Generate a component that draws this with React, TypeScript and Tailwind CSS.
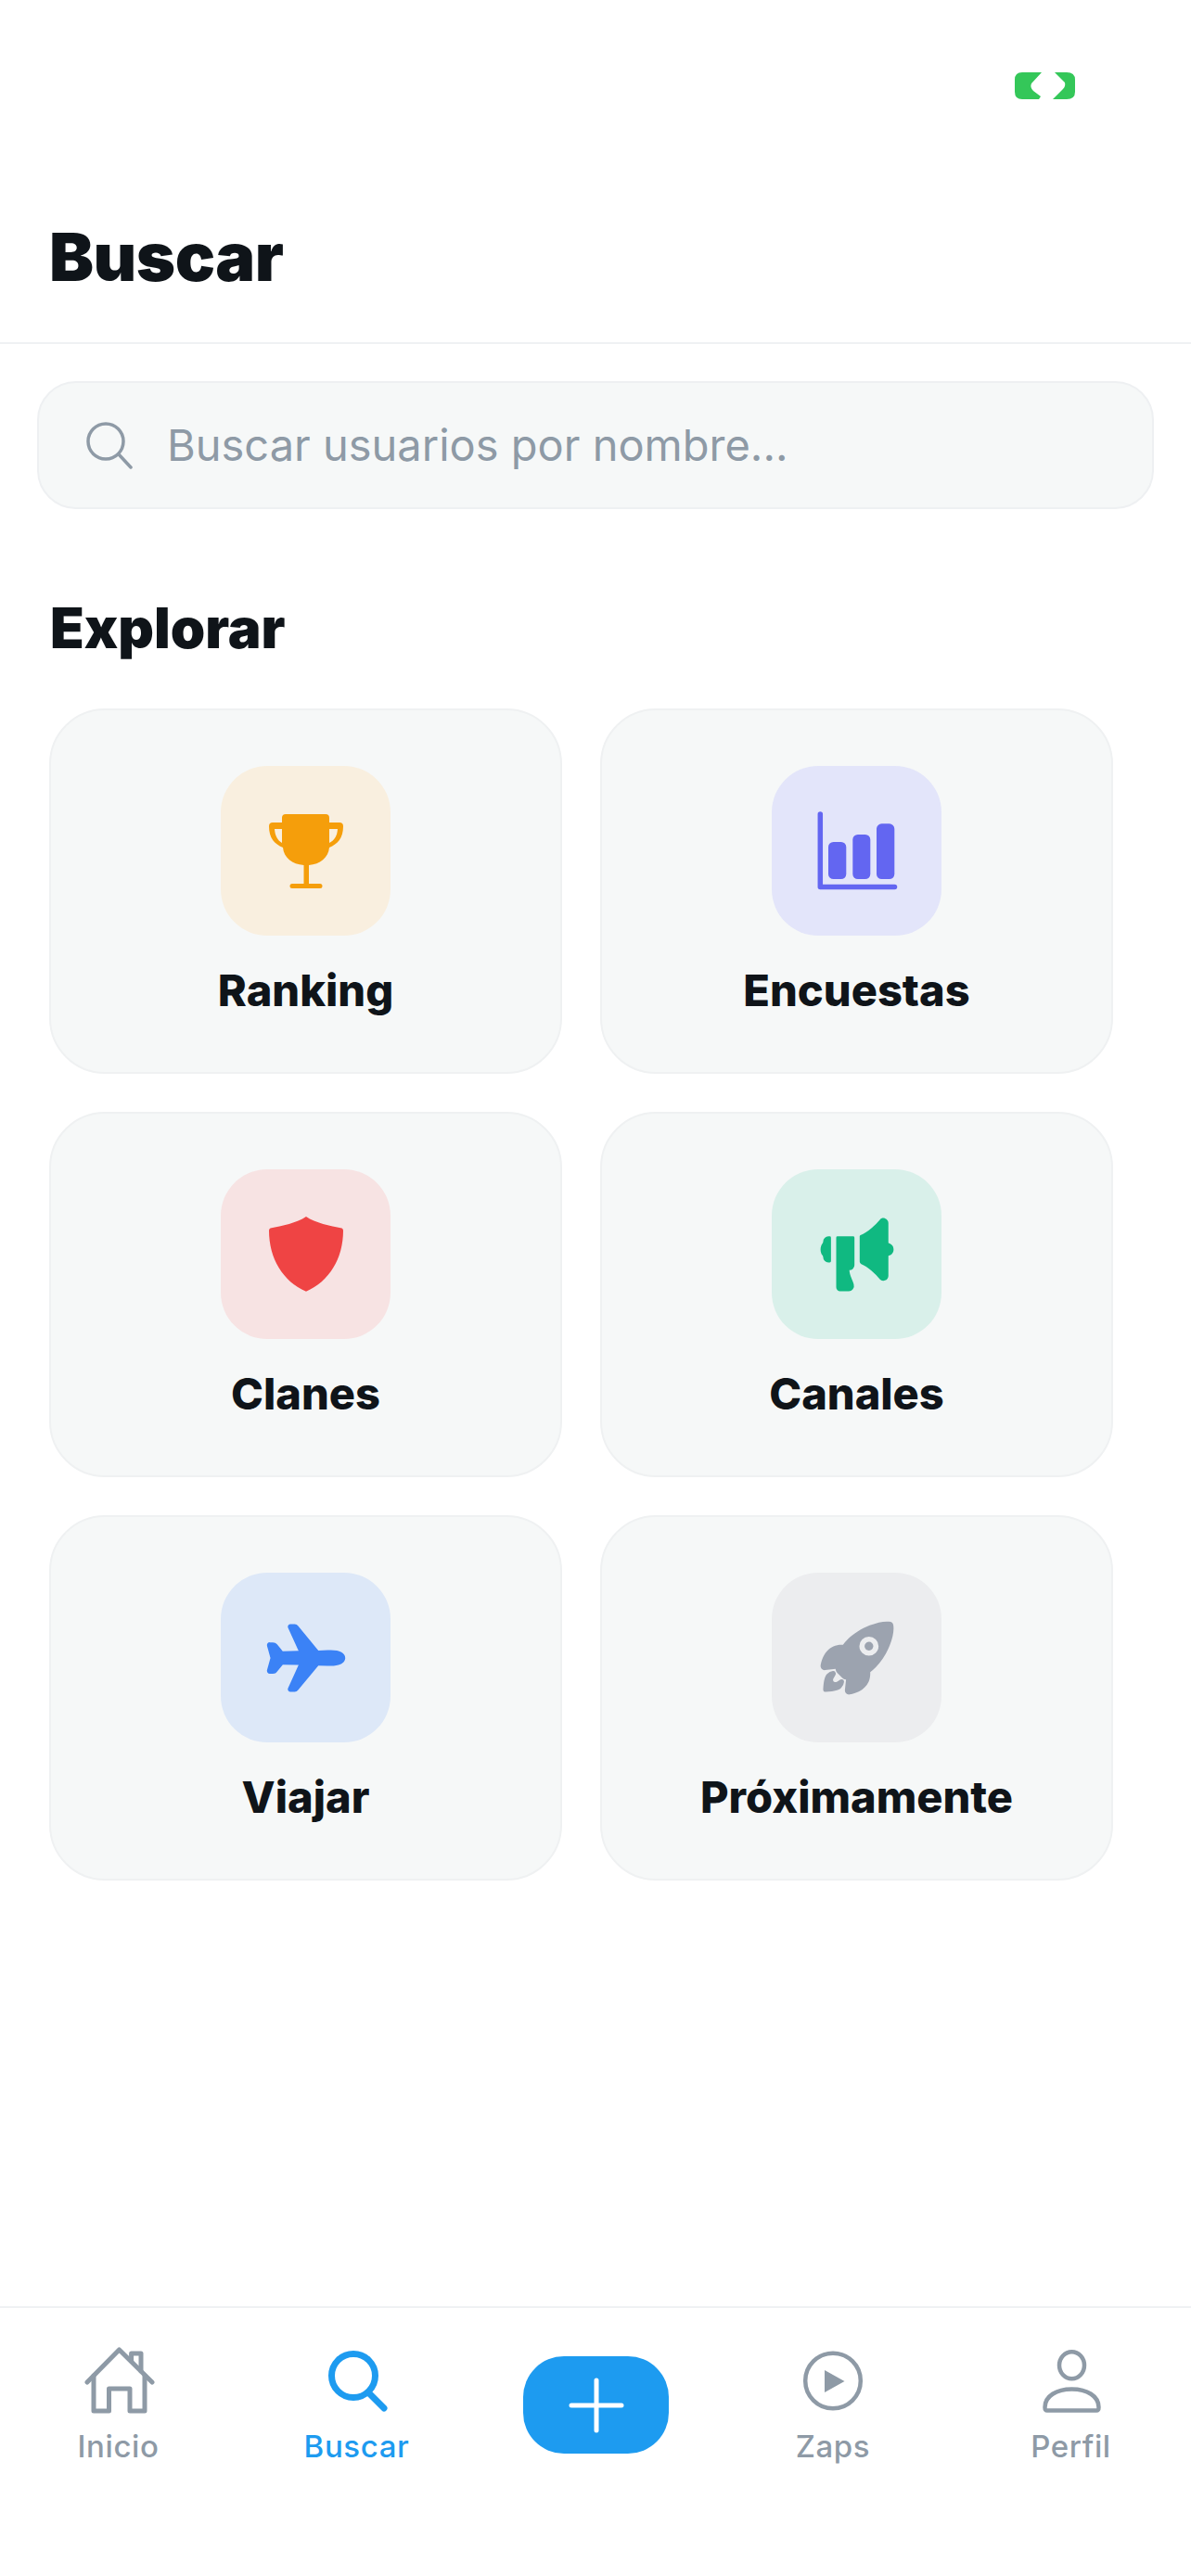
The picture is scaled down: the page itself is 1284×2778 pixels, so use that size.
import React from "react";
import { IoMegaphone, IoAirplane, IoRocket } from "react-icons/io5";

function Trophy() {
  return (
    <svg width="80" height="80" viewBox="0 0 80 80" fill="currentColor" fillRule="evenodd">
      <path d="M18 0H61Q65 0 65 4V9H76Q80 9 80 13C80 26 74 32 65 36C64 47 55 54 43 55V75H55Q57.5 75 57.5 77.5Q57.5 80 55 80H25Q22.5 80 22.5 77.5Q22.5 75 25 75H37.5V55C25 54 16 47 15 36C6 32 0 26 0 13Q0 9 4 9H14V4Q14 0 18 0ZM6 16C6.5 23 9 28 14 31V16ZM74 16C73.5 23 71 28 65 31V16Z" />
    </svg>
  );
}

function Chart() {
  return (
    <svg width="90" height="90" viewBox="-2 -2 90 90" fill="currentColor">
      <rect x="12" y="33" width="19.3" height="40" rx="5.5" />
      <rect x="38.3" y="25" width="19" height="48" rx="5.5" />
      <rect x="64" y="13.3" width="19.3" height="59.7" rx="5.5" />
      <path d="M3.3 3V81.5H83.5" fill="none" stroke="currentColor" strokeWidth="5.5" strokeLinecap="round" strokeLinejoin="round" />
    </svg>
  );
}

function Shield() {
  return (
    <svg width="80" height="81" viewBox="0 0 80 81" fill="currentColor">
      <path d="M40 0C30 7 14 10 1.5 12.5Q0 13 0 15C0 45 15 70 40 80.7C65 70 80 45 80 15Q80 13 78.5 12.5C66 10 50 7 40 0Z" />
    </svg>
  );
}

const items = [
  { label: "Ranking", icon: <Trophy />, tile: "bg-[#f9efdf]", color: "text-[#f59e0b]" },
  { label: "Encuestas", icon: <Chart />, tile: "bg-[#e3e5fa]", color: "text-[#6366f1]" },
  { label: "Clanes", icon: <Shield />, tile: "bg-[#f7e3e3]", color: "text-[#ef4444]" },
  { label: "Canales", icon: <IoMegaphone size={90} />, tile: "bg-[#d9f0ea]", color: "text-[#10b981]" },
  { label: "Viajar", icon: <IoAirplane size={90} />, tile: "bg-[#dde8f8]", color: "text-[#3b82f6]" },
  { label: "Próximamente", icon: <IoRocket size={90} />, tile: "bg-[#ecedef]", color: "text-[#9ca3af]" },
];

function NavItem({ label, active, children }: { label: string; active?: boolean; children: React.ReactNode }) {
  return (
    <div className="flex flex-col items-center">
      {children}
      <span className={`mt-[10px] text-[33px] leading-[40px] font-medium tracking-[0.6px] ${active ? "text-[#1d9bf0]" : "text-[#8e9aa6]"}`}>
        {label}
      </span>
    </div>
  );
}

export default function App() {
  return (
    <div className="relative h-[2778px] w-[1284px] bg-white font-['Inter',sans-serif] text-[#0f1419]">
      <header className="flex h-[371px] flex-col border-b-2 border-[#eff1f3] pt-[78px]">
        <div className="flex justify-end pr-[125px]">
          <svg width="66" height="30" viewBox="43 18 66 30" fill="#34c759">
            <path d="M73 18H52Q44 18 44 26V39Q44 47 52 47H70L72 44L64 38Q60 34 62 30Z" />
            <path d="M87 18H100Q109 18 109 26V39Q109 47 100 47H85L96 36Q99 33 98 29Z" />
          </svg>
        </div>
        <h1 className="mt-[127px] pl-[53px] text-[72px] leading-[84px] font-black tracking-[-0.5px]">Buscar</h1>
      </header>

      <div className="mx-[40px] mt-[40px] flex h-[138px] items-center rounded-[42px] border-2 border-[#eef0f2] bg-[#f6f8f8] pl-[50px]">
        <svg width="52" height="52" viewBox="0 0 52 52" fill="none" stroke="#8e9aa6" strokeWidth="3.5" strokeLinecap="round">
          <circle cx="22" cy="22" r="19" />
          <path d="M36 36L49 50" />
        </svg>
        <span className="ml-[36px] text-[47px] leading-[56px] text-[#8e9aa6]">Buscar usuarios por nombre...</span>
      </div>

      <h2 className="mt-[92px] pl-[54px] text-[60px] leading-[72px] font-black">Explorar</h2>

      <div className="mt-[51px] ml-[53px] grid w-[1147px] grid-cols-2 gap-[41px]">
        {items.map(({ label, icon, tile, color }) => (
          <div key={label} className="flex h-[394px] flex-col items-center rounded-[60px] border-2 border-[#eff1f2] bg-[#f6f8f8] pt-[60px]">
            <div className={`flex h-[183px] w-[183px] items-center justify-center rounded-[50px] ${tile} ${color}`}>
              {icon}
            </div>
            <span className="mt-[29px] text-[47px] leading-[60px] font-extrabold">{label}</span>
          </div>
        ))}
      </div>

      <nav className="absolute right-0 bottom-0 left-0 h-[291px] border-t-2 border-[#eff1f3] pt-[39px]">
        <div className="grid grid-cols-[255px_259px_257px_254px_259px]">
          <NavItem label="Inicio">
            <svg width="80" height="80" viewBox="0 0 80 80" fill="none" stroke="#8e9aa6" strokeWidth="5" strokeLinecap="round" strokeLinejoin="round">
              <path d="M6 41L40.5 6L76 41" />
              <path d="M13 34V72H29.5V48H52V72H68V34" />
              <path d="M53.6 18V10H64V29" />
            </svg>
          </NavItem>
          <NavItem label="Buscar" active>
            <svg width="80" height="80" viewBox="0 0 80 80" fill="none" stroke="#1d9bf0" strokeWidth="7" strokeLinecap="round">
              <circle cx="36" cy="34" r="23.5" />
              <path d="M52 52L69 69" />
            </svg>
          </NavItem>
          <div className="flex justify-center pt-[13px]">
            <div className="flex h-[105px] w-[157px] items-center justify-center rounded-[44px] bg-[#1d9bf0]">
              <svg width="60" height="60" viewBox="0 0 60 60" fill="none" stroke="#ffffff" strokeWidth="5" strokeLinecap="round">
                <path d="M30 3V57M3 30H57" />
              </svg>
            </div>
          </div>
          <NavItem label="Zaps">
            <svg width="80" height="80" viewBox="0 0 80 80" fill="none" stroke="#8e9aa6" strokeWidth="4.5">
              <circle cx="40" cy="39.5" r="29.8" />
              <path d="M31 28L52.5 40L31 52Z" fill="#8e9aa6" stroke="none" />
            </svg>
          </NavItem>
          <NavItem label="Perfil">
            <svg width="80" height="80" viewBox="0 0 80 80" fill="none" stroke="#8e9aa6" strokeWidth="4.5" strokeLinejoin="round">
              <ellipse cx="40.5" cy="22.7" rx="13.5" ry="14.5" />
              <path d="M11.5 68C11.5 56 24 48.5 40.5 48.5C57 48.5 69.5 56 69.5 68C69.5 70.5 69 71.5 67 71.5H14C12 71.5 11.5 70.5 11.5 68Z" />
            </svg>
          </NavItem>
        </div>
      </nav>
    </div>
  );
}
